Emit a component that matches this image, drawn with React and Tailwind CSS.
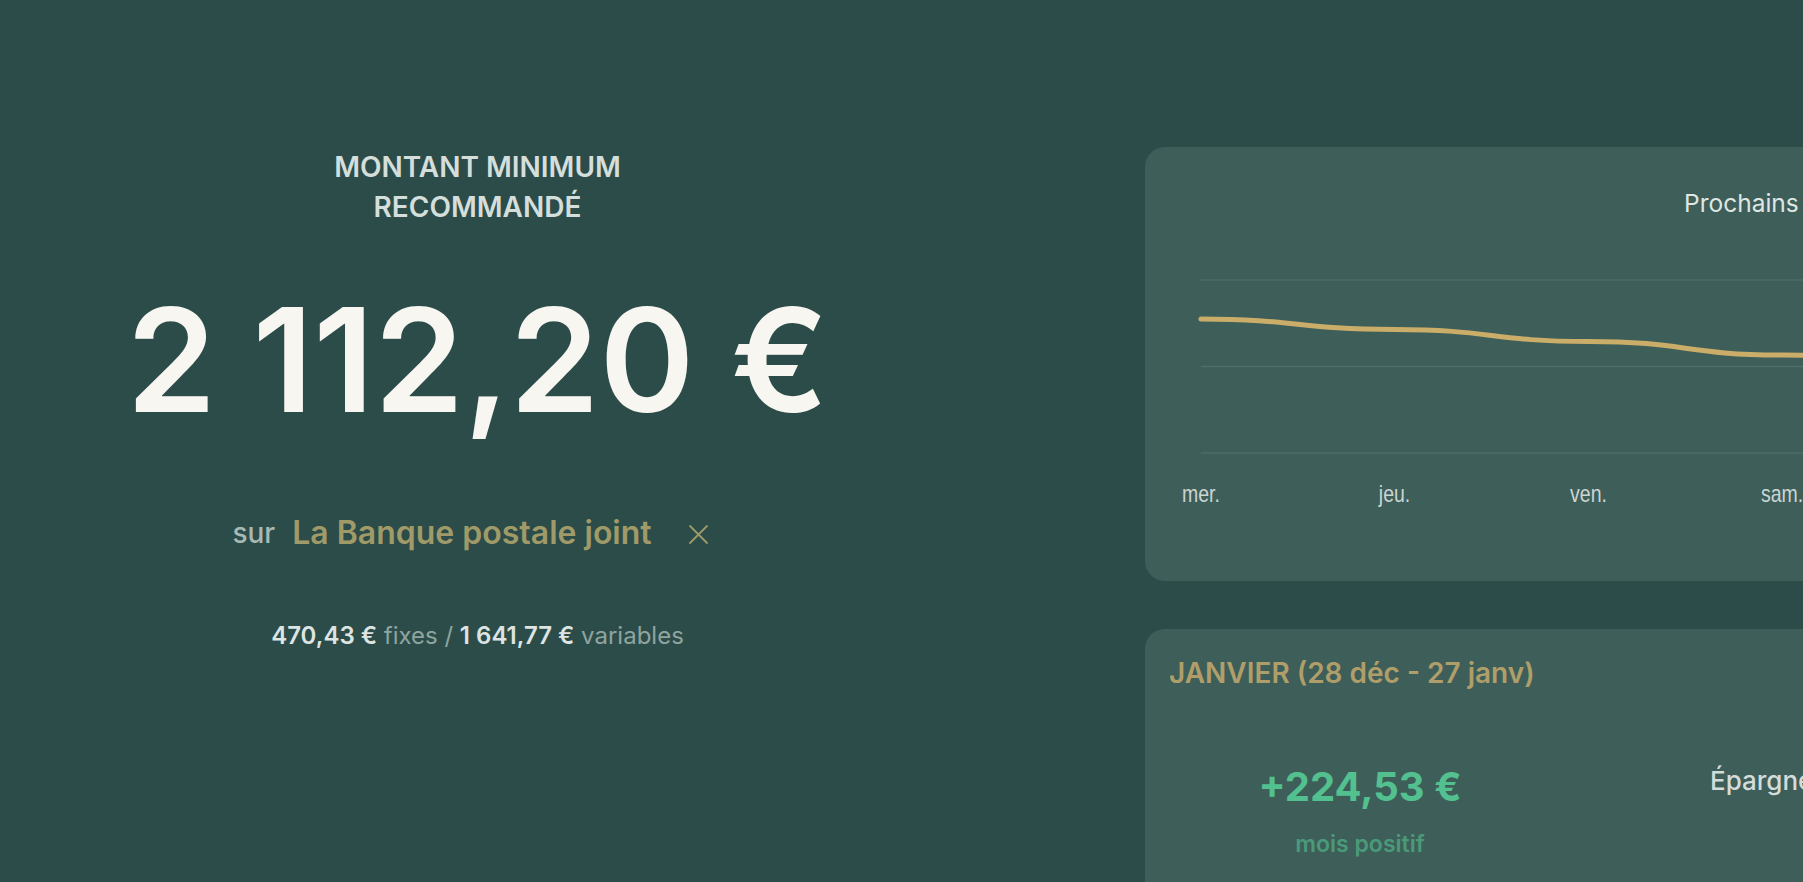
import React from 'react';

// Points du graphique (coordonnées dans le SVG de la carte)
const points = [
  { x: 56, y: 49, label: 'mer.' },
  { x: 249.5, y: 59.5, label: 'jeu.' },
  { x: 443.5, y: 71.5, label: 'ven.' },
  { x: 637, y: 85, label: 'sam.' },
  { x: 830.5, y: 92, label: 'dim.' },
  { x: 1024, y: 101, label: 'lun.' },
];

const buildPath = (pts) => {
  let d = `M ${pts[0].x} ${pts[0].y}`;
  for (let i = 1; i < pts.length; i++) {
    const p0 = pts[i - 1];
    const p1 = pts[i];
    const h = (p1.x - p0.x) / 2;
    d += ` C ${p0.x + h} ${p0.y}, ${p1.x - h} ${p1.y}, ${p1.x} ${p1.y}`;
  }
  return d;
};

function ForecastChart() {
  return (
    <svg width="1100" height="250" className="block mt-[51px]">
      {[10, 96.5, 183].map((y) => (
        <line key={y} x1="56" x2="1100" y1={y} y2={y} stroke="#4d6d68" strokeWidth="1.6" />
      ))}
      <path d={buildPath(points)} fill="none" stroke="#c9ad69" strokeWidth="5" strokeLinecap="round" />
      {points.map((p) => (
        <text
          key={p.label}
          transform={`translate(${p.x} 232) scale(1 1.2)`}
          textAnchor="middle"
          fontSize="19.5"
          fill="#cbd5d2"
          fontFamily="'Liberation Sans', Arial, sans-serif"
        >
          {p.label}
        </text>
      ))}
    </svg>
  );
}

function CloseIcon() {
  return (
    <svg width="21" height="21" viewBox="0 0 21 21" className="block">
      <path d="M2 2 L19 19 M19 2 L2 19" stroke="#a09a68" strokeWidth="1.8" strokeLinecap="round" />
    </svg>
  );
}

export default function App() {
  return (
    <div className="w-[1803px] h-[882px] overflow-hidden bg-[#2c4c4a] font-['Inter',sans-serif] flex">
      {/* Colonne gauche : montant recommandé */}
      <div className="w-[955px] shrink-0 pt-[147px] flex flex-col items-center">
        <h2 className="text-[28px] leading-[40px] font-semibold text-center text-[#d4dedb]">
          MONTANT MINIMUM
          <br />
          RECOMMANDÉ
        </h2>

        <div className="mt-[61px] text-[144px] leading-none font-semibold text-[#f8f6f1] whitespace-nowrap">
          2 112,20 €
        </div>

        <div className="mt-[77px] flex items-center h-[48px] pr-[14px]">
          <span className="text-[28px] font-medium text-[#a8b9b5]">sur</span>
          <span className="ml-[17px] text-[32px] font-semibold text-[#a09a68]">La Banque postale joint</span>
          <button className="ml-[36px] mt-[2px]">
            <CloseIcon />
          </button>
        </div>

        <p className="mt-[63px] text-[24px] leading-[32px] text-[#8fa49f] whitespace-nowrap">
          <span className="font-semibold text-[#dde4e2]">470,43 €</span> fixes /{' '}
          <span className="font-semibold text-[#dde4e2]">1 641,77 €</span> variables
        </p>
      </div>

      {/* Colonne droite : cartes */}
      <div className="ml-[190px] w-[1100px] shrink-0 pt-[147px] flex flex-col gap-[48px]">
        <div className="h-[434px] shrink-0 rounded-[20px] bg-[#3e5e59] pt-[40px]">
          <h3 className="ml-[539px] text-[24.5px] leading-[32px] text-[#dfe6e3] whitespace-nowrap">
            Prochains 7 jours
          </h3>
          <ForecastChart />
        </div>

        <div className="h-[400px] shrink-0 rounded-[20px] bg-[#3e5e59] pt-[26px] px-[24px]">
          <h3 className="text-[28px] leading-[36px] font-semibold text-[#b09e6a] whitespace-nowrap">
            JANVIER (28 déc - 27 janv)
          </h3>
          <div className="mt-[72px] flex items-start">
            <div className="w-[382px] shrink-0 flex flex-col items-center">
              <div className="text-[40px] leading-[48px] font-bold text-[#53c18f] whitespace-nowrap">+224,53 €</div>
              <div className="mt-[17px] text-[23px] leading-[32px] font-semibold text-[#4a9a7a]">mois positif</div>
            </div>
            <div className="pl-[159px] text-[26px] leading-[36px] font-medium text-[#d3dcd9] whitespace-nowrap">
              Épargne disponible
            </div>
          </div>
        </div>
      </div>
    </div>
  );
}
